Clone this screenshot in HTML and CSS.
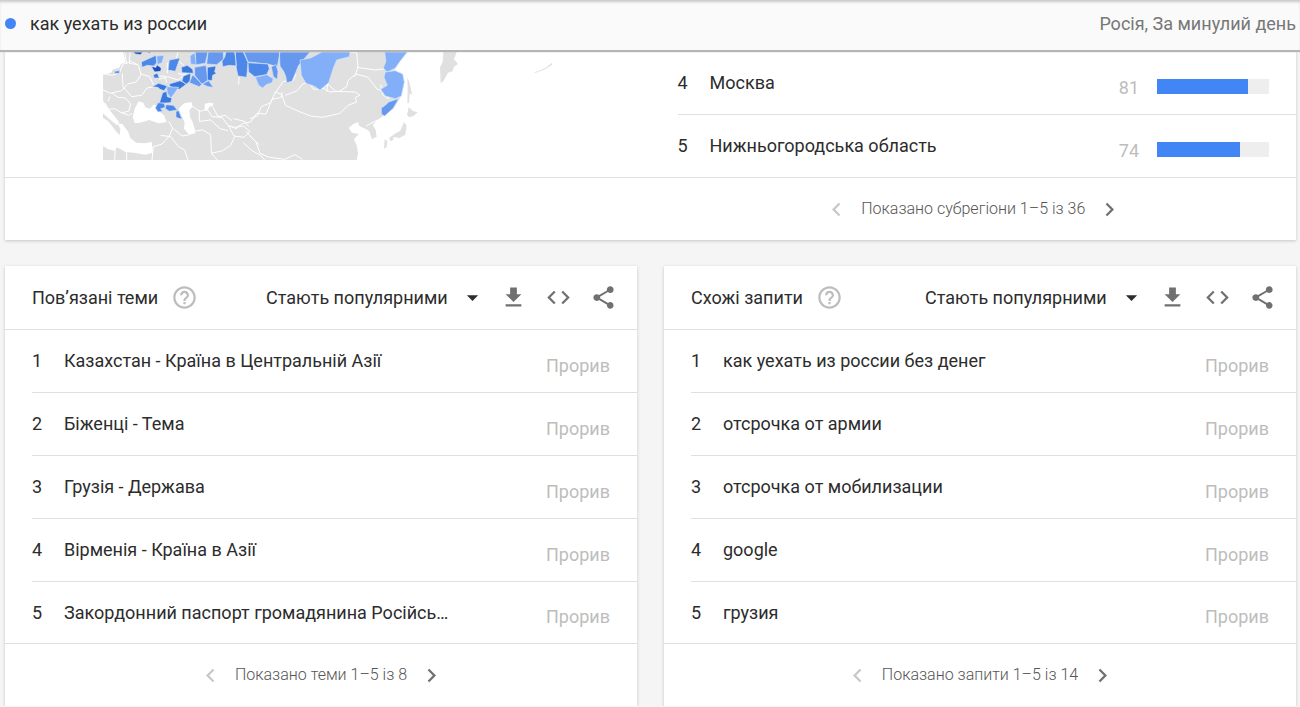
FILE: index.html
```html
<!DOCTYPE html>
<html lang="uk">
<head>
    <meta charset="UTF-8">
    <meta name="viewport" content="width=device-width, initial-scale=1.0">
    <title>как уехать из россии - Тренди</title>
    <link rel="stylesheet" href="styles.css">
</head>
<body>
    <svg class="sprite" aria-hidden="true">
        <symbol id="help" viewBox="0 0 24 24"><path d="M11 18h2v-2h-2v2zm1-16C6.480 2 2 6.480 2 12s4.480 10 10 10 10-4.480 10-10S17.520 2 12 2zm0 18c-4.410 0-8-3.590-8-8s3.590-8 8-8 8 3.590 8 8-3.590 8-8 8zm0-14c-2.210 0-4 1.790-4 4h2c0-1.100.9-2 2-2s2 .9 2 2c0 2-3 1.750-3 5h2c0-2.250 3-2.500 3-5 0-2.210-1.790-4-4-4z"/></symbol>
        <symbol id="arrow" viewBox="0 0 24 24"><path d="M7 10l5 5 5-5z"/></symbol>
        <symbol id="download" viewBox="0 0 24 24"><path d="M19 9h-4V3H9v6H5l7 7 7-7zM5 18v2h14v-2H5z"/></symbol>
        <symbol id="code" viewBox="0 0 24 24"><path d="M9.400 16.600L4.800 12l4.600-4.600L8 6l-6 6 6 6 1.400-1.400zm5.200 0l4.600-4.600-4.600-4.600L16 6l6 6-6 6-1.400-1.400z"/></symbol>
        <symbol id="share" viewBox="0 0 24 24"><path d="M18 16.080c-.76 0-1.440.3-1.960.77L8.910 12.700c.05-.23.09-.46.09-.7s-.04-.47-.09-.7l7.050-4.110c.54.5 1.250.81 2.040.81 1.660 0 3-1.340 3-3s-1.340-3-3-3-3 1.340-3 3c0 .24.04.47.09.7L8.040 9.810C7.500 9.310 6.790 9 6 9c-1.660 0-3 1.340-3 3s1.340 3 3 3c.79 0 1.500-.31 2.040-.81l7.120 4.160c-.05.21-.08.43-.08.65 0 1.610 1.310 2.920 2.920 2.920s2.920-1.310 2.920-2.920-1.310-2.920-2.920-2.920z"/></symbol>
        <symbol id="prev" viewBox="0 0 24 24"><path d="M15.410 7.410L14 6l-6 6 6 6 1.410-1.410L10.830 12z"/></symbol>
        <symbol id="next" viewBox="0 0 24 24"><path d="M10 6L8.590 7.410 13.170 12l-4.580 4.590L10 18l6-6z"/></symbol>
    </svg>

    <header class="topbar">
        <span class="dot"></span>
        <h1>как уехать из россии</h1>
        <p class="scope">Росія, За минулий день</p>
    </header>

    <main>
        <section class="card regions">
            <div class="map-col">
                <svg class="map" viewBox="39 18 1350 324" role="img" aria-label="Мапа субрегіонів">
                    <g class="land">
                        <path d="M39 18H950L930 46 912 76 934 84 943 108 934 150 910 190 880 210 862 222 848 236 857 252 860 272 846 280 838 256 826 248 808 240 804 228 790 234 776 246 786 260 806 264 792 280 800 298 804 322 800 342H39z"/>
                        <path d="M952 94l6 14 9 38-8-4-2 28-5 2 1-40zM956 184l14 12 13 2-12 12-14 4-6-8zM942 228l8 12-4 26-18 10-14-3-14 8-3-5 20-14 14-8zM884 280l8 4-2 20-8 4zM898 278l10-2 4 4-10 6z"/>
                        <path d="M1060 18h40l-8 22 12 14-12 8-4 14-14 4-14 26-8 6-2-48 8-16z"/>
                        <path d="M1332 80l34-14 20-16v6l-20 14-30 11z"/>
                    </g>
                    <g class="water">
                        <path d="M39 18h60l8 30-14 6-6 12-18 4-6 10-24 6z"/>
                        <path d="M128 212l6-24 12-22 14 4 6 14 14 4 10-12 10 2-4 8 26 22 8 20-24 4-28-10-28 8-16 2z"/>
                        <path d="M282 172l22-4 4 14-10 10 2 22 8 14 6 20 2 14-18 4-16-18 2-18-10-22-8-20z"/>
                        <path d="M39 216l16 10 22 28 12 14 2-18-8-18 14 2 18 24 6 18 18 14 26 2 20-4 4 32-24 6-32-6-26-2-26-14-8 10-18-4-16-10z"/>
                        <path d="M39 164l12 18 22 28 14 18-6 10-24-20-18-16z"/>
                        <path d="M344 174l12-4 14 2-2 8-10 2-6 12-8-2z"/>
                    </g>
                    <g class="borders">
                        <path d="M39 82l28 6 22-8 10-26 26-8 20 12 8 28-14 22-26 6-18 20-34 8-22-10M97 82l2 40 26 30 30-4 16-22 22-4M64 140l20 14 22 2 16 18-6 22-22 4-20-12-18 2-12-20M94 200l22 8 10-6M60 152l-6 14M153 84l26 8 12 26M104 18l6 36M120 18l-2 34 26 4M190 92l34-2 6 20M206 100l28-8 30 10 22-16M232 82v-32M264 18l-6 22 24 18M264 82l22 6 10-30"/>
                        <path d="M306 180l24 16 22-6 14 22 30 2 18 24 24 10 20-16 24-4 18-26 28 2 18-44 28-6 2-16M328 192v34l34-4 28 26 24 6M414 240l18 4 28-4 20 16-18 18-30-4-14-26M310 256l28-4 24 14 2 56 18 20M364 322l34-8 24-16 12-26M236 226l12 20-10 24-22 24-26 8-4 40M212 268l30 4 24 30 18 10 10 30M250 248l26 22 22-4M76 304l-2 38M110 312v30M460 290l26 24 26 14 12 14M468 256l28 30 12 10M430 218l34 8 12 16M368 182l16 30 22-4 20 16"/>
                        <path d="M480 218l22-8 12-28 28-12 14-32 20 8 10 32 40 18 36 14 36 4 52-12 24-24 26-10-4-14 14-6-14-10-60-2-22-22-14 14-30 2-12-20 14-20 14-20 6-20-10-24M586 148l36-14 14-18 26-12 44 26 14 8 28-2 22-14 4-18 24-20 36 10 28 36 22 6 14 24M760 18l40 2 4 44-10 28M800 64l56 8 34-4M556 140l24-34 30-2 8-20M430 50l18 30-2 36M710 138l4-26M480 270l18 18 12 34 28 12 46 6 30-14 24 14M862 222l-34 18M894 158l-16-12-6-30"/>
                    </g>
                    <g class="shade">
                        <path class="s5" d="M130 18h28l-6 8-16-2zM170 18h12l-2 4z"/>
                        <path class="s3" d="M154 48l44-20 2 22-8 10-20-2-16 6zM238 42l32-6-8 22-6 18-22-4zM74 76l14-2v8H74z"/>
                        <path class="s5" d="M184 62l14 2 2-8 14 10-2 10-18 2z"/>
                        <path class="s4" d="M190 86l12-4 6 14-16 0zM274 64l18-6 16 12 2 12-34-2zM280 90l22-8-2 22-12 12-12-12zM186 122l20-10 26 8-10 14-12-4-6-6zM238 114l32-10 20 10-22 16-28-8z"/>
                        <path class="s4" d="M218 140l12-4 2 16 14 4-4 14-34 2z"/>
                        <path class="s3" d="M196 186l8-16 18 2 4 12-14 4 6 8-14 2zM228 176l22 2 12 14-24 4-12-8zM258 196l8-2 10 26-18-6z"/>
                        <path class="s1" d="M200 30l22-2-6 22-14 6zM230 122l36 2-14 20-10 12-10-14zM300 30l14-10 6 36-18-2z"/>
                        <path class="s2" d="M316 18h38l-8 34-28 4zM354 18h46v22l-20 16-30-2zM314 64l34-6 6 44-18 14-22-28zM308 86l28 28-8 8-30-12zM336 114l20-10 14 20-16-2z"/>
                        <path class="s4" d="M352 64l26-4-4 18 6 4-12 6-2 16-14-2z"/>
                        <path class="s3" d="M408 18h26l6 42-22-2-20 4-2-16 8-12zM436 18h24l14 32-4 44-26-4-6-28z"/>
                        <path class="s2" d="M462 18h108l-8 44-28-8-60-6zM568 18h92l-34 40-20 48-16 4-2-16-6-16-12-18z"/>
                        <path class="s3" d="M474 50l60 4 4 14-8 18-36 6-18-14z"/>
                        <path class="s2" d="M544 62l14-6 6 20-2 24-12-8z"/>
                        <path class="s1" d="M496 94l34-8 20 12-4 12-18 6-10 10-12-8zM630 42l32-6 34-18h84l-2 14-38 10-10 24-14 44-26 22-18-12-24-8-14-24z"/>
                        <path class="s1" d="M884 18h68l-22 28-14 20-24 12-12-12 8-20zM886 78l30-4 22 10 5 24-9 42-18 8-30-8-14-20 20-12-10-24z"/>
                        <path class="s2" d="M874 186l14-10 8-8 30-10-16 28-26 24-10-6z"/>
                    </g>
                </svg>
            </div>
            <ol class="rows" start="4">
                <li><span class="num">4</span><span class="name">Москва</span><span class="value">81</span><span class="bar"><span class="fill" style="width: 81%"></span></span></li>
                <li><span class="num">5</span><span class="name">Нижньогородська область</span><span class="value">74</span><span class="bar"><span class="fill" style="width: 74%"></span></span></li>
            </ol>
            <footer class="pager">
                <button disabled aria-label="Назад"><svg class="icon"><use href="#prev"/></svg></button>
                <span>Показано субрегіони 1–5 із 36</span>
                <button aria-label="Далі"><svg class="icon"><use href="#next"/></svg></button>
            </footer>
        </section>

        <div class="columns">
            <section class="card">
                <header class="card-head">
                    <h2>Пов’язані теми</h2>
                    <button class="help" aria-label="Довідка"><svg class="icon"><use href="#help"/></svg></button>
                    <label class="sort">
                        <select aria-label="Сортування тем"><option>Стають популярними</option></select>
                        <svg class="icon"><use href="#arrow"/></svg>
                    </label>
                    <div class="actions">
                        <button aria-label="Завантажити"><svg class="icon"><use href="#download"/></svg></button>
                        <button aria-label="Вставити"><svg class="icon"><use href="#code"/></svg></button>
                        <button aria-label="Поділитися"><svg class="icon"><use href="#share"/></svg></button>
                    </div>
                </header>
                <ol class="rows">
                    <li><span class="num">1</span><span class="name">Казахстан - Країна в Центральній Азії</span><span class="value">Прорив</span></li>
                    <li><span class="num">2</span><span class="name">Біженці - Тема</span><span class="value">Прорив</span></li>
                    <li><span class="num">3</span><span class="name">Грузія - Держава</span><span class="value">Прорив</span></li>
                    <li><span class="num">4</span><span class="name">Вірменія - Країна в Азії</span><span class="value">Прорив</span></li>
                    <li><span class="num">5</span><span class="name">Закордонний паспорт громадянина Російсь…</span><span class="value">Прорив</span></li>
                </ol>
                <footer class="pager">
                    <button disabled aria-label="Назад"><svg class="icon"><use href="#prev"/></svg></button>
                    <span>Показано теми 1–5 із 8</span>
                    <button aria-label="Далі"><svg class="icon"><use href="#next"/></svg></button>
                </footer>
            </section>

            <section class="card">
                <header class="card-head">
                    <h2>Схожі запити</h2>
                    <button class="help" aria-label="Довідка"><svg class="icon"><use href="#help"/></svg></button>
                    <label class="sort">
                        <select aria-label="Сортування запитів"><option>Стають популярними</option></select>
                        <svg class="icon"><use href="#arrow"/></svg>
                    </label>
                    <div class="actions">
                        <button aria-label="Завантажити"><svg class="icon"><use href="#download"/></svg></button>
                        <button aria-label="Вставити"><svg class="icon"><use href="#code"/></svg></button>
                        <button aria-label="Поділитися"><svg class="icon"><use href="#share"/></svg></button>
                    </div>
                </header>
                <ol class="rows">
                    <li><span class="num">1</span><span class="name">как уехать из россии без денег</span><span class="value">Прорив</span></li>
                    <li><span class="num">2</span><span class="name">отсрочка от армии</span><span class="value">Прорив</span></li>
                    <li><span class="num">3</span><span class="name">отсрочка от мобилизации</span><span class="value">Прорив</span></li>
                    <li><span class="num">4</span><span class="name">google</span><span class="value">Прорив</span></li>
                    <li><span class="num">5</span><span class="name">грузия</span><span class="value">Прорив</span></li>
                </ol>
                <footer class="pager">
                    <button disabled aria-label="Назад"><svg class="icon"><use href="#prev"/></svg></button>
                    <span>Показано запити 1–5 із 14</span>
                    <button aria-label="Далі"><svg class="icon"><use href="#next"/></svg></button>
                </footer>
            </section>
        </div>
    </main>
</body>
</html>
```
FILE: styles.css
```css
* {
    margin: 0;
    padding: 0;
    box-sizing: border-box;
}
body {
    font-family: Roboto, "Liberation Sans", sans-serif;
    font-size: 18px;
    line-height: 24px;
    background-color: #f5f5f5;
    color: #2c2c2c;
}
h1, h2 {
    font-size: 18px;
    font-weight: 400;
}
button {
    display: flex;
    background: none;
    border: none;
    color: #707070;
    cursor: pointer;
}
.sprite {
    display: none;
}
.icon {
    width: 27px;
    height: 27px;
    fill: currentColor;
    flex-shrink: 0;
}
.topbar {
    position: sticky;
    top: 0;
    z-index: 1;
    display: flex;
    align-items: center;
    height: 50px;
    padding: 0 4px 3px 5px;
    background-color: #fafafa;
    box-shadow: 0 2px 1px #b5b5b5, inset 0 3px 3px -1px #c8c8c8;
}
.dot {
    width: 11px;
    height: 11px;
    margin-right: 14px;
    border-radius: 50%;
    background-color: #4285f4;
}
.scope {
    margin-left: auto;
    color: #777;
}
main {
    padding: 0 4px 0 5px;
}
.card {
    background-color: #fff;
    box-shadow: 0 1px 3px #c4c4c4;
}
.regions {
    display: grid;
    grid-template-columns: 1fr 1fr;
    padding-top: 2px;
    margin-bottom: 26px;
}
.map-col {
    padding-left: 98px;
}
.map {
    display: block;
    width: 450px;
    height: 108px;
}
.land {
    fill: #e0e0e0;
}
.water {
    fill: #fff;
}
.borders {
    fill: none;
    stroke: #fff;
    stroke-width: 3;
    stroke-linejoin: round;
}
.shade {
    stroke: #d4e3fc;
    stroke-width: 2;
}
.s1 { fill: #82aff7; }
.s2 { fill: #6699ee; }
.s3 { fill: #4d88e8; }
.s4 { fill: #3b78dc; }
.s5 { fill: #1c50b8; }
.rows {
    list-style: none;
    padding-left: 27px;
}
.rows li {
    display: flex;
    align-items: center;
    height: 63px;
    padding-right: 27px;
    border-bottom: 1px solid #e0e0e0;
}
.rows li:last-child {
    height: 62px;
    border-bottom: none;
}
.num {
    width: 32px;
}
.name {
    flex: 1;
    min-width: 0;
}
.value {
    padding-top: 9px;
    color: #bdbdbd;
}
.bar {
    width: 112px;
    height: 15px;
    margin: 6px 0 0 18px;
    background-color: #eee;
}
.fill {
    display: block;
    height: 100%;
    background-color: #4285f4;
}
.pager {
    display: flex;
    align-items: center;
    justify-content: center;
    gap: 11px;
    height: 63px;
    border-top: 1px solid #e0e0e0;
    font-size: 16px;
    font-weight: 300;
    color: #555;
}
.pager button:disabled {
    color: #c8c8c8;
}
.regions .pager {
    grid-column: 1 / -1;
    padding-left: 50%;
}
.columns {
    display: grid;
    grid-template-columns: 1fr 1fr;
    gap: 27px;
}
.columns .card-head {
    height: 64px;
}
.columns .rows li:last-child {
    height: 61px;
}
.card-head {
    display: flex;
    align-items: center;
    padding: 0 20px 0 27px;
    border-bottom: 1px solid #e0e0e0;
}
.help {
    margin-left: 13px;
    color: #bdbdbd;
}
.sort {
    display: flex;
    align-items: center;
    gap: 11px;
    margin: 0 14px 0 auto;
}
.sort select {
    appearance: none;
    border: none;
    background: none;
    font: inherit;
    color: inherit;
}
.actions {
    display: flex;
    gap: 18px;
}
@media (max-width: 900px) {
    .columns, .regions {
        grid-template-columns: 1fr;
    }
    .regions .pager {
        padding-left: 0;
    }
}
```
